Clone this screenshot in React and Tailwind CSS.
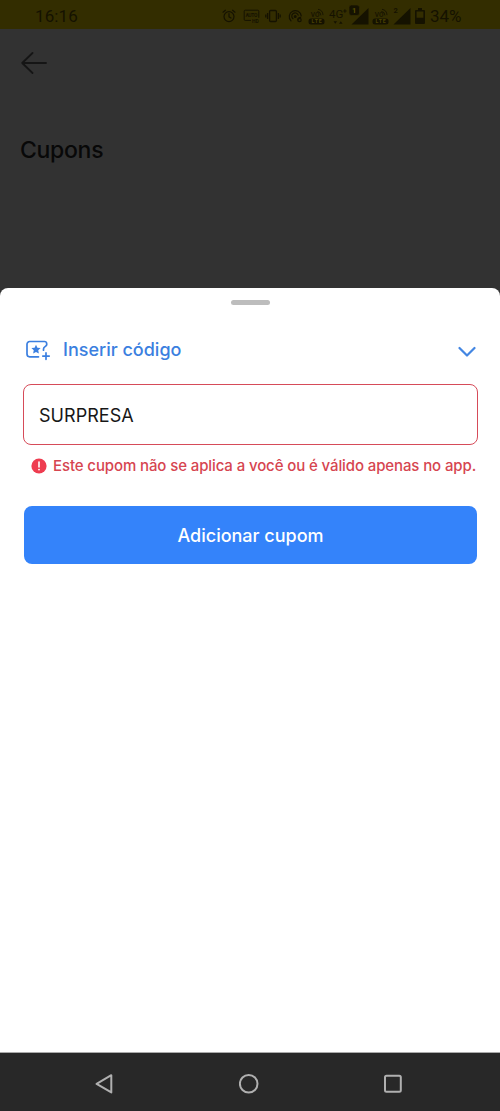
import React from 'react';

const AlarmIcon = () => (
  <svg className="w-[14px] h-[14px] shrink-0" viewBox="0 0 14 14" fill="none" stroke="currentColor" strokeWidth="1.2" strokeLinecap="round">
    <circle cx="7" cy="7.6" r="5" />
    <path d="M7 4.6v3.2l2 1.2M1 3.2l2.4-2M13 3.2l-2.4-2" />
  </svg>
);

const AutoHdIcon = () => (
  <svg className="w-[17px] h-[14px] shrink-0" viewBox="0 0 17 14" fill="none">
    <path d="M8 11.4H2.2a1 1 0 0 1-1-1V2.2a1 1 0 0 1 1-1h12.6a1 1 0 0 1 1 1v6.6" stroke="currentColor" />
    <text x="2.4" y="7.8" fontSize="5" fontWeight="700" textLength="12" fill="currentColor">AUTO</text>
    <text x="9" y="13.6" fontSize="5" fontWeight="700" fill="currentColor">HD</text>
  </svg>
);

const VibrateIcon = () => (
  <svg className="w-[16px] h-[14px] shrink-0" viewBox="0 0 16 14" fill="none" stroke="currentColor" strokeWidth="1.3">
    <rect x="4.6" y="1.5" width="6.8" height="11" rx="1" />
    <path d="M2.6 4v6M13.4 4v6M.8 5.5v3M15.2 5.5v3" />
  </svg>
);

const HotspotIcon = () => (
  <svg className="w-[15px] h-[14px] shrink-0" viewBox="0 0 15 14" fill="none" stroke="currentColor" strokeWidth="1.2" strokeLinecap="round">
    <path d="M3 11.8a6 6 0 1 1 10.2-5M5 9.7a3.3 3.3 0 1 1 5.2-3.6" />
    <circle cx="7.2" cy="7.6" r=".9" fill="currentColor" />
    <path d="M12.6 8.3c-1.7.1-2.8 1.1-2.8 2.7" />
    <circle cx="11.5" cy="11" r="1.7" />
  </svg>
);

const VolteIcon = () => (
  <svg className="w-[17px] h-[17px] shrink-0" viewBox="0 0 17 17" fill="none">
    <text x="2.8" y="9" fontSize="6.5" fontWeight="500" fill="currentColor">VO</text>
    <path d="M9.4 3.4a4 4 0 0 1 3.5 4M10 1.3a6 6 0 0 1 5 5.8" stroke="currentColor" strokeWidth=".9" />
    <rect x=".5" y="10.5" width="16" height="6" rx="2.5" fill="currentColor" />
    <text x="3.6" y="15.4" fontSize="5.2" fontWeight="700" textLength="10" fill="#4a4200">LTE</text>
  </svg>
);

const NetworkIcon = () => (
  <svg className="w-[18px] h-[17px] shrink-0" viewBox="0 0 18 17" fill="currentColor">
    <text x="0" y="9.5" fontSize="11.5">4G</text>
    <path d="M14.4 2.5h1V1.3h1v1.2h1.2v1h-1.2v1.2h-1V3.5h-1zM4.5 13.2h3.6l-1.8 2.6zM10 15.8h3.6l-1.8-2.6z" />
  </svg>
);

const SignalIcon = ({ sim }) => (
  <svg className="w-[20px] h-[20px] shrink-0" viewBox="0 0 20 20" fill="currentColor">
    <path d="M2.5 19.5 19.5 3v16.5z" />
    {sim === '1' && <rect x="0" y="0" width="10.5" height="10.5" rx="2.5" stroke="#332d00" strokeWidth=".7" />}
    <text x={sim === '1' ? 3 : 2.5} y="8" fontSize="7.5" fontWeight="700" fill={sim === '1' ? '#5a5000' : 'currentColor'}>{sim}</text>
  </svg>
);

const BatteryIcon = () => (
  <svg className="w-[10px] h-[16px] shrink-0" viewBox="0 0 10 16">
    <path d="M3 0h4v2h2a1 1 0 0 1 1 1v12a1 1 0 0 1-1 1H1a1 1 0 0 1-1-1V3a1 1 0 0 1 1-1h2zM1.6 3.6v6.2h6.8V3.6z" fill="currentColor" fillRule="evenodd" />
  </svg>
);

const StatusBar = () => (
  <div className="h-[29px] shrink-0 bg-[#332d00] text-[#151200] flex items-center pl-[35px] pt-[3px] font-['Roboto',sans-serif]">
    <span className="w-[187px] text-[17px] leading-5 tracking-[0.1px]">16:16</span>
    <div className="flex items-center">
      <AlarmIcon />
      <span className="w-[7px]" />
      <AutoHdIcon />
      <span className="w-[5px]" />
      <VibrateIcon />
      <span className="w-[7px]" />
      <HotspotIcon />
      <span className="w-[5px]" />
      <VolteIcon />
      <span className="w-[4px]" />
      <NetworkIcon />
      <span className="w-[2px]" />
      <span className="-mt-[3px]"><SignalIcon sim="1" /></span>
      <span className="w-[3px]" />
      <VolteIcon />
      <span className="w-[2px]" />
      <span className="-mt-[3px]"><SignalIcon sim="2" /></span>
      <span className="w-[4px]" />
      <BatteryIcon />
      <span className="ml-[5px] text-[17px] leading-5">34%</span>
    </div>
  </div>
);

const CouponIcon = () => (
  <svg className="w-[26px] h-[22px] shrink-0" viewBox="0 0 26 22" fill="none" stroke="#3b7fe0" strokeWidth="1.7" strokeLinecap="round" strokeLinejoin="round">
    <path d="M12.5 16.8H3.7a2.7 2.7 0 0 1-2.7-2.7V4.2a2.7 2.7 0 0 1 2.7-2.7h14.8a2.2 2.2 0 0 1 2.2 2.2v1.1c0 1.5-3.2 1.8-3.2 4.1v1.3M20 12.9v6.4M16.8 16.1h6.4" />
    <path d="M10 4.7l1.4 3 3.2.4-2.35 2.2.6 3.2L10 12l-2.85 1.5.6-3.2L5.4 8.1l3.2-.4z" fill="#3b7fe0" stroke="none" />
  </svg>
);

const CouponSheet = () => (
  <main className="flex-1 flex flex-col bg-white rounded-t-lg px-6">
    <div className="w-[39px] h-[5px] mt-3 mx-auto rounded-full bg-[#bdbdbd]" />

    <div className="h-8 mt-[28px] flex items-center text-[#3b7fe0]">
      <span className="ml-[2px] mt-[3px]"><CouponIcon /></span>
      <span className="ml-[11px] text-[18px] font-medium">Inserir código</span>
      <svg className="w-[18px] h-[12px] ml-auto mt-[5px]" viewBox="0 0 18 12" fill="none" stroke="#4386e2" strokeWidth="2.2" strokeLinecap="round" strokeLinejoin="round">
        <path d="M1.5 2 9 9.5 16.5 2" />
      </svg>
    </div>

    <div className="h-[61px] mt-[19px] -ml-px -mr-[2px] px-[15px] pt-[2px] flex items-center rounded-lg border-[1.5px] border-[#d64b59] text-[18px] text-[#171717] tracking-[0.05px]">
      SURPRESA
    </div>

    <div className="h-6 mt-[9px] pl-[7px] flex items-center text-[#d64550]">
      <svg className="w-4 h-4 -mt-px shrink-0" viewBox="0 0 16 16">
        <circle cx="8" cy="8" r="7.6" fill="#ee3c50" />
        <path d="M8 4v5" stroke="white" strokeWidth="1.6" strokeLinecap="round" />
        <circle cx="8" cy="11.6" r=".9" fill="white" />
      </svg>
      <span className="ml-[6px] text-[15px] font-medium whitespace-nowrap tracking-[-0.11px]">
        Este cupom não se aplica a você ou é válido apenas no app.
      </span>
    </div>

    <button className="h-[58px] mt-7 -mr-px rounded-lg bg-[#3483fa] text-white text-[18px] font-medium">
      Adicionar cupom
    </button>
  </main>
);

const NavigationBar = () => (
  <nav className="h-[59px] shrink-0 border-t border-[#aaa] bg-[#282828] flex items-center pt-[3px] pl-[94px]">
    <svg className="w-5 h-5" viewBox="0 0 20 20" fill="none" stroke="#b0b0b0" strokeWidth="2" strokeLinejoin="round">
      <path d="M17.3 1.2v17.2L2.6 9.8z" />
    </svg>
    <svg className="w-5 h-5 ml-[125px]" viewBox="0 0 20 20" fill="none" stroke="#b0b0b0" strokeWidth="2">
      <circle cx="9.7" cy="9.8" r="8.8" />
    </svg>
    <svg className="w-5 h-5 ml-[124px]" viewBox="0 0 20 20" fill="none" stroke="#b0b0b0" strokeWidth="2">
      <rect x="2" y="1.8" width="15.8" height="16" rx="1.5" />
    </svg>
  </nav>
);

const App = () => {
  return (
    <div className="w-[500px] h-[1111px] flex flex-col overflow-hidden bg-[#323232] font-['Inter',sans-serif]">
      <StatusBar />
      <header className="h-[259px] shrink-0 px-5">
        <svg className="w-[27px] h-6 mt-[22px] ml-px" viewBox="0 0 27 24" fill="none" stroke="#151515" strokeWidth="1.8" strokeLinecap="round" strokeLinejoin="round">
          <path d="M11.5 2 1.2 12l10.3 10M1.2 12H25" />
        </svg>
        <h1 className="mt-[59px] text-[23px] leading-8 font-medium tracking-[-0.3px] text-[#080808]">Cupons</h1>
      </header>
      <CouponSheet />
      <NavigationBar />
    </div>
  );
};

export default App;
